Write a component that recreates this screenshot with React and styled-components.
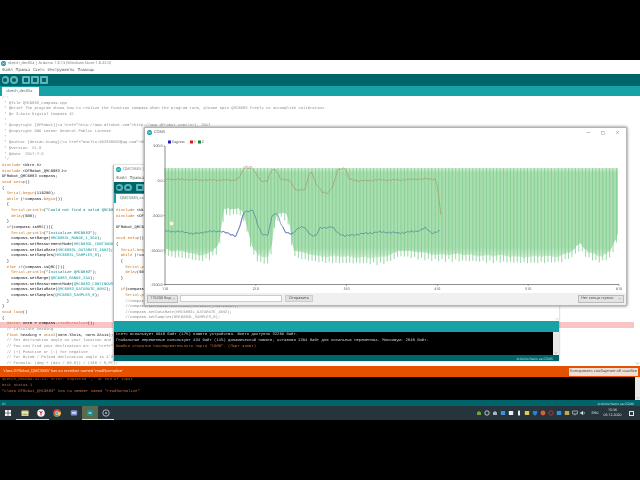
import React from 'react';
import styled, { createGlobalStyle } from 'styled-components';
import { Minus, Square, X, ChevronDown } from 'lucide-react';

const Global = createGlobalStyle`
  html, body { margin: 0; padding: 0; background: #000; width: 640px; height: 480px; overflow: hidden; }
  * { box-sizing: border-box; text-rendering: geometricPrecision; }
`;
const Screen = styled.div`
  width: 640px; height: 480px; background: #000; padding-top: 60px;
  font-family: "Open Sans", "Liberation Sans", sans-serif; overflow: hidden;
`;
const Desktop = styled.div`
  position: relative; width: 640px; height: 360px; display: flex; flex-direction: column;
  filter: blur(0.35px); overflow: hidden;
`;
const MainWindow = styled.div`flex: 1; min-height: 0; display: flex; flex-direction: column; background: #fff;`;
const TitleBar = styled.div`
  height: ${p => p.$h || 7}px; flex: none; display: flex; align-items: center; gap: 2px; padding-left: ${p => p.$pad || 1}px;
  background: #fff; color: #777; font-size: 3.9px; white-space: nowrap;
`;
const AppBadge = styled.svg`width: 5px; height: 5px; flex: none;`;
const MenuBar = styled.div`
  height: ${p => p.$h || 7}px; flex: none; display: flex; align-items: center; gap: ${p => p.$gap || 3}px; padding-left: 2px;
  background: #fff; color: #555; font-size: 4.1px; white-space: nowrap;
`;
const Toolbar = styled.div`
  height: ${p => p.$h || 12}px; flex: none; background: #00656a; display: flex; align-items: center; padding-left: 1.5px; gap: 1.6px;
`;
const ToolBtn = styled.div`
  width: 7.4px; height: 7.4px; background: #5cb6ba; border-radius: ${p => p.$round ? '50%' : '1px'};
  margin-right: ${p => p.$sep ? 3 : 0}px; display: flex; align-items: center; justify-content: center;
  & > i { display: block; width: 3.6px; height: 3.6px; background: #00656a; border-radius: ${p => p.$round ? '50%' : '0'}; }
`;
const TabRow = styled.div`
  height: ${p => p.$h || 10}px; flex: none; background: #17a2a7; display: flex; align-items: flex-end; padding-left: 2px;
`;
const Tab = styled.div`
  width: ${p => p.$w || 37}px; height: 9px; background: #fff; color: #3d6f70; font-size: 3.9px; display: flex; align-items: center;
  padding-left: 4px; white-space: nowrap; overflow: hidden; font-family: "Open Sans", sans-serif;
`;
const EditorWrap = styled.div`flex: 1; min-height: 0; display: flex; background: #fff;`;
const Code = styled.div`
  flex: 1; min-width: 0; overflow: hidden; padding-top: ${p => p.$top || 0}px;
  font-family: "Liberation Mono", monospace; font-size: 3.87px; line-height: 5.67px; color: #111;
`;
const Line = styled.div`
  height: 5.67px; white-space: pre; padding-left: ${p => p.$left || 2}px; background: ${p => p.$hl ? '#f8c4c4' : 'transparent'};
`;
const Tok = styled.span`color: ${p => p.$c};`;
const ScrollBar = styled.div`
  width: ${p => p.$w || 6}px; flex: none; background: ${p => p.$bg || '#fff'}; display: flex; flex-direction: column; justify-content: flex-end; align-items: center;
  color: #666;
`;
const ErrorBar = styled.div`
  height: 11px; flex: none; background: #e65100; color: #ffe5d6; font-size: 3.9px; display: flex; align-items: center;
  justify-content: space-between; padding: 0 2px 0 3px; white-space: nowrap;
`;
const CopyBtn = styled.div`
  width: 69px; height: 8px; background: #f1ddd3; color: #444; font-size: 3.9px; display: flex; align-items: center; justify-content: center;
`;
const ConsoleWrap = styled.div`height: ${p => p.$h}px; flex: none; background: #000; display: flex;`;
const ConsoleText = styled.div`
  flex: 1; min-width: 0; overflow: hidden; padding: ${p => p.$top || 0}px 0 0 ${p => p.$left || 2}px;
  font-family: "Liberation Mono", monospace; font-size: 3.9px; line-height: 6px; white-space: pre;
`;
const ConsoleLine = styled.div`color: ${p => p.$c || '#d8d8d8'};`;
const StatusBar = styled.div`
  height: 6px; flex: none; background: #00656a; color: #bfe0e0; font-size: 3.3px; display: flex; align-items: center; justify-content: space-between; padding: 0 6px 0 2px; white-space: nowrap;
`;
const Taskbar = styled.div`
  height: 14px; flex: none; background: #26343c; display: flex; align-items: center; color: #dfe6e8;
`;
const TaskSlot = styled.div`
  width: 16.35px; height: 14px; display: flex; align-items: center; justify-content: center;
  background: ${p => p.$active ? '#5b6a4e' : 'transparent'};
  border-bottom: ${p => p.$run ? '1px solid #d8dde0' : '1px solid transparent'};
`;
const Tray = styled.div`margin-left: auto; display: flex; align-items: center; gap: 2px; padding-right: 6px; height: 14px;`;
const TrayIcon = styled.svg`width: 6px; height: 6px; flex: none;`;
const TrayLang = styled.div`font-size: 3.5px; margin-left: 2px; width: 11px; text-align: center;`;
const Clock = styled.div`font-size: 3.5px; line-height: 5.2px; text-align: center; width: 20px;`;
const Notif = styled.div`width: 5.5px; height: 5px; border: 0.7px solid #dfe6e8; margin-left: 4px;`;

const SecondWindow = styled.div`
  position: absolute; left: 113px; top: 105px; width: 446px; height: 196px;
  display: flex; flex-direction: column; background: #fff; border-left: 1px solid #bbb; box-shadow: 0 0 2px rgba(0,0,0,.35);
`;
const Plotter = styled.div`
  position: absolute; left: 144px; top: 67px; width: 483px; height: 179px; display: flex; flex-direction: column;
  background: #fff; border: 1px solid #b5b5b5; box-shadow: 0 0 3px rgba(0,0,0,.55);
`;
const PlotTitle = styled.div`
  height: 9px; flex: none; display: flex; align-items: center; gap: 2px; padding: 0 6px 0 2px; font-size: 3.9px; color: #555;
`;
const WinCtl = styled.div`margin-left: auto; display: flex; gap: 10px; color: #444; align-items: center;`;
const PlotSvg = styled.svg`display: block; flex: none;`;
const Controls = styled.div`
  flex: 1; background: #f0f0f0; display: flex; align-items: center; padding: 0 2px 1px 2px; font-size: 3.8px; color: #444; gap: 2px;
`;
const Sel = styled.div`
  width: ${p => p.$w}px; height: 8px; background: #e4e4e4; border: 0.5px solid #bbb; display: flex; align-items: center; justify-content: space-between;
  padding: 0 2px; white-space: nowrap; margin-left: ${p => p.$auto ? 'auto' : '0'};
`;
const Input = styled.div`width: 102px; height: 7.5px; background: #fff; border: 0.5px solid #ccc;`;
const SendBtn = styled.div`width: 28px; height: 7.5px; background: #e1e1e1; border: 0.5px solid #ccc; display: flex; align-items: center; justify-content: center; margin-left: 1px;`;

const KW = /(\bvoid\b|\bwhile\b|\bif\b|\belse\b|\bfloat\b|\bsetup\b|\bloop\b|\bSerial\b|\bbegin\b|\bprintln\b|\bdelay\b|\batan2\b|#include|"[^"]*"|HMC5883L?_[A-Z0-9_]+|QMC5883_[A-Z0-9_]+|\bVector\b|readNormalize)/g;
const tint = t => {
  if (t.startsWith('"')) return '#0a7a7e';
  if (/^(void|while|if|else|float|#include|Vector)$/.test(t)) return '#c8701c';
  if (/^(Serial)$/.test(t)) return '#d07a20';
  if (/MC5883/.test(t)) return '#00979c';
  if (t === 'readNormalize') return '#d87070';
  return '#c8701c';
};
const Highlight = ({ text }) => {
  if (/^\s*(\/\/|\/\*|\*)/.test(text)) return <Tok $c="#8d8d8d">{text}</Tok>;
  return text.split(KW).map((t, i) => (i % 2 ? <Tok key={i} $c={tint(t)}>{t}</Tok> : t));
};

const mainCode = `/*!
 * @file QMC5883_compass.cpp
 * @brief The program shows how to realize the function compass.When the program runs, please spin QMC5883 freely to accomplish calibration.
 * @n 3-Axis Digital Compass IC
 *
 * @copyright [DFRobot](<a href="http://www.dfrobot.com">http://www.dfrobot.com</a>), 2017
 * @copyright GNU Lesser General Public License
 *
 * @author [dexian.huang](<a href="mailto:952838602@qq.com">952838602@qq.com</a>)
 * @version  V1.0
 * @date  2017-7-3
 */
#include <Wire.h>
#include <DFRobot_QMC5883.h>
DFRobot_QMC5883 compass;
void setup()
{
  Serial.begin(115200);
  while (!compass.begin())
  {
    Serial.println("Could not find a valid QMC5883 sensor, check wiring!");
    delay(500);
  }
  if(compass.isHMC()){
    Serial.println("Initialize HMC5883");
    compass.setRange(HMC5883L_RANGE_1_3GA);
    compass.setMeasurementMode(HMC5883L_CONTINOUS);
    compass.setDataRate(HMC5883L_DATARATE_15HZ);
    compass.setSamples(HMC5883L_SAMPLES_8);
  }
  else if(compass.isQMC()){
    Serial.println("Initialize QMC5883");
    compass.setRange(QMC5883_RANGE_2GA);
    compass.setMeasurementMode(QMC5883_CONTINOUS);
    compass.setDataRate(QMC5883_DATARATE_50HZ);
    compass.setSamples(QMC5883_SAMPLES_8);
  }
}
void loop()
{
  Vector norm = compass.readNormalize();
  // Calculate heading
  float heading = atan2(norm.YAxis, norm.XAxis);
  // Set declination angle on your location and fix heading
  // You can find your declination on: <a href="http://magnetic-declination.com/">http://magnetic-declination.com/</a>
  // (+) Positive or (-) for negative
  // For Bytom / Poland declination angle is 4'26E (positive)
  // Formula: (deg + (min / 60.0)) / (180 / M_PI);`.split('\n');

const secondCode = `#include <Wire.h>
#include <DFRobot_QMC5883.h>

DFRobot_QMC5883 compass;

void setup()
{
  Serial.begin(115200);
  while (!compass.begin())
  {
    Serial.println("Could not find a valid QMC5883 sensor, check wiring!");
    delay(500);
  }

  if(compass.isHMC()){
    Serial.println("Initialize HMC5883");
    //compass.setRange(HMC5883L_RANGE_1_3GA);
    //compass.setMeasurementMode(HMC5883L_CONTINOUS);
    //compass.setDataRate(HMC5883L_DATARATE_15HZ);
    //compass.setSamples(HMC5883L_SAMPLES_8);`.split('\n');

const Badge = ({ bg = '#00979c' }) => (
  <AppBadge viewBox="0 0 10 10">
    <circle cx="5" cy="5" r="5" fill={bg} />
    <circle cx="3.3" cy="5" r="1.6" fill="none" stroke="#fff" strokeWidth="0.9" />
    <circle cx="6.7" cy="5" r="1.6" fill="none" stroke="#fff" strokeWidth="0.9" />
  </AppBadge>
);

const ToolRow = ({ h }) => (
  <Toolbar $h={h}>
    <ToolBtn $round><i /></ToolBtn>
    <ToolBtn $round $sep><i /></ToolBtn>
    <ToolBtn><i /></ToolBtn>
    <ToolBtn><i /></ToolBtn>
    <ToolBtn><i /></ToolBtn>
  </Toolbar>
);

/* ---------- plot data ---------- */
const OX = 145, OY = 137; // plot-svg origin on the page
const lerp = (pts, x) => {
  for (let i = 1; i < pts.length; i++) {
    if (x <= pts[i][0]) {
      const [a, b] = pts[i - 1], [c, d] = pts[i];
      return b + (d - b) * (x - a) / (c - a);
    }
  }
  return pts[pts.length - 1][1];
};
const wob = x => Math.sin(x * 1.37) * 0.8 + Math.sin(x * 3.3 + 1) * 0.5 + Math.sin(x * 0.41) * 0.5;
const bottomPts = [[165,254],[172,257],[185,258],[200,261],[212,258],[219,250],[222,228],[224,216],[238,214],[243,218],[247,232],[252,252],[258,262],[268,264],[272,250],[275,224],[279,218],[286,219],[290,232],[293,256],[302,259],[320,262],[340,263],[360,263],[380,264],[388,262],[400,256],[415,258],[430,260],[470,261],[500,262],[530,263],[560,262],[572,257],[580,250],[588,258],[600,262],[610,258],[618,240]];
const orangePts = [[165,179],[200,180],[235,180],[240,177],[244,168],[252,168],[256,174],[261,181],[267,181],[272,170],[276,170],[281,179],[290,181],[296,190],[305,190],[309,174],[312,172],[316,184],[322,192],[328,193],[333,186],[338,169],[345,168],[349,179],[360,181],[375,180],[400,180],[420,179],[435,179],[437,183],[439,200],[441,215]];
const bluePts = [[165,231],[185,232],[193,234],[205,232],[220,231],[236,236],[240,226],[244,212],[253,210],[258,226],[262,234],[268,235],[272,216],[277,213],[282,226],[286,233],[292,234],[298,228],[304,227],[311,235],[316,236],[320,228],[332,227],[338,233],[345,236],[360,234],[380,232],[400,233],[418,231],[425,228],[432,233],[440,231]];

const poly = (pts, x0, x1, off = 0) => {
  const o = [];
  for (let x = x0; x <= x1; x += 1.2) o.push(`${(x - OX).toFixed(1)},${(lerp(pts, x) + wob(x) * 0.7 + off - OY).toFixed(1)}`);
  return o.join(' ');
};
const stripes = [];
for (let x = 165; x <= 618; x += 3.42) stripes.push(x);
const areaPts = () => {
  const o = [`${165 - OX},${168 - OY}`, `${618 - OX},${168 - OY}`];
  for (let x = 618; x >= 165; x -= 2) o.push(`${x - OX},${lerp(bottomPts, x) - 6 + wob(x) - OY}`);
  return o.join(' ');
};

const Plot = () => {
  const axisColor = '#6e6e6e';
  const tickYs = [[146, '500.0'], [181, '0.0'], [215.6, '-500.0'], [250.3, '-1000.0'], [284.5, '-1500.0']];
  const tickXs = [[165, '110'], [255.8, '210'], [346.5, '310'], [437.3, '410'], [528.2, '510'], [619, '610']];
  return (
    <PlotSvg width="481" height="156" viewBox="0 0 481 156" fontFamily="Open Sans, sans-serif">
      <defs>
        <linearGradient id="fade" x1="0" y1="0" x2="0" y2="1">
          <stop offset="0" stopColor="#d6f0d9" />
          <stop offset="0.05" stopColor="#a9deb1" />
          <stop offset="0.88" stopColor="#a9deb1" />
          <stop offset="1" stopColor="#d6f0d9" />
        </linearGradient>
      </defs>
      <polygon points={areaPts()} fill="url(#fade)" />
      {stripes.map(x => (
        <line key={x} x1={x - OX} x2={x - OX} y1={168 - OY} y2={lerp(bottomPts, x) + wob(x * 2) - OY} stroke="#7fcc8d" strokeWidth="0.8" />
      ))}
      <polyline points={poly(orangePts, 243, 253, -1.5)} fill="none" stroke="#d86a6a" strokeWidth="0.5" />
      <polyline points={poly(orangePts, 165, 441)} fill="none" stroke="#a8935a" strokeWidth="0.65" />
      <polyline points={poly(bluePts, 165, 440)} fill="none" stroke="#3a7d93" strokeWidth="0.65" />
      <polyline points={poly(bluePts, 221, 244)} fill="none" stroke="#6a66cc" strokeWidth="0.65" />
      <polyline points={poly(bluePts, 283, 293)} fill="none" stroke="#6a66cc" strokeWidth="0.65" />
      <line x1={165 - OX} x2={165 - OX} y1={146 - OY} y2={284.5 - OY} stroke={axisColor} strokeWidth="0.8" />
      <line x1={165 - OX} x2={619 - OX} y1={284.5 - OY} y2={284.5 - OY} stroke={axisColor} strokeWidth="0.8" />
      {tickYs.map(([y, t]) => (
        <g key={t}>
          <line x1={163.5 - OX} x2={165 - OX} y1={y - OY} y2={y - OY} stroke={axisColor} strokeWidth="0.6" />
          <text x={162.5 - OX} y={y + 1.3 - OY} textAnchor="end" fontSize="3.6" fill="#444">{t}</text>
        </g>
      ))}
      {tickXs.map(([x, t]) => (
        <g key={t}>
          <line x1={x - OX} x2={x - OX} y1={284.5 - OY} y2={286 - OY} stroke={axisColor} strokeWidth="0.6" />
          <text x={x - OX} y={289.5 - OY} textAnchor="middle" fontSize="3.6" fill="#444">{t}</text>
        </g>
      ))}
      <rect x={168 - OX} y={140.5 - OY} width="3" height="3" fill="#1c1cc4" />
      <text x={172 - OX} y={143.3 - OY} fontSize="3.4" fill="#444">Degress</text>
      <rect x={190 - OX} y={140.5 - OY} width="3" height="3" fill="#d81c1c" />
      <text x={194 - OX} y={143.3 - OY} fontSize="3.4" fill="#444">Y</text>
      <rect x={198 - OX} y={140.5 - OY} width="3" height="3" fill="#148a2c" />
      <text x={202 - OX} y={143.3 - OY} fontSize="3.4" fill="#444">Z</text>
      <circle cx={171.5 - OX} cy={223.5 - OY} r="2" fill="#f6f6d8" stroke="#e6e6a0" strokeWidth="0.5" />
    </PlotSvg>
  );
};

/* ---------- taskbar icons ---------- */
const Ico = styled.svg`width: 8px; height: 8px; display: block;`;
const WinIco = () => <Ico viewBox="0 0 8 8"><g fill="#f2f5f7"><rect x="1" y="1" width="2.7" height="2.7"/><rect x="4.3" y="1" width="2.7" height="2.7"/><rect x="1" y="4.3" width="2.7" height="2.7"/><rect x="4.3" y="4.3" width="2.7" height="2.7"/></g></Ico>;
const FolderIco = () => <Ico viewBox="0 0 8 8"><rect x="0.5" y="1.5" width="7" height="5.5" fill="#e8cf7a"/><rect x="0.5" y="3" width="7" height="1" fill="#f5e6a8"/><rect x="2.5" y="5" width="3" height="0.7" fill="#6a90b0"/></Ico>;
const YaIco = () => <Ico viewBox="0 0 8 8"><circle cx="4" cy="4" r="3.8" fill="#f3f3f3"/><path d="M2.6 2 L4 4.2 L5.4 2 M4 4.2 V6.4" stroke="#d8222a" strokeWidth="1" fill="none"/></Ico>;
const ChromeIco = () => <Ico viewBox="0 0 8 8"><circle cx="4" cy="4" r="3.8" fill="#d9503f"/><path d="M4 4 L0.7 6 A3.8 3.8 0 0 0 5.9 7.3Z" fill="#4fa85b"/><path d="M4 4 L7.5 2.6 A3.8 3.8 0 0 1 5.9 7.3Z" fill="#f0c33c"/><circle cx="4" cy="4" r="1.5" fill="#5b8fd8" stroke="#fff" strokeWidth="0.5"/></Ico>;
const DiscordIco = () => <Ico viewBox="0 0 8 8"><rect x="0.8" y="1.2" width="6.4" height="5.4" rx="1" fill="#7f91d8"/><rect x="2" y="3" width="4" height="1.6" fill="#d8def5"/></Ico>;
const ArduinoIco = () => <Ico viewBox="0 0 8 8"><rect x="1" y="1" width="6" height="6" fill="#1f8f92"/><rect x="2.5" y="3.4" width="3" height="1.2" fill="#cfe8e8"/></Ico>;
const RingIco = () => <Ico viewBox="0 0 8 8"><circle cx="4" cy="4" r="3.2" fill="#222c33" stroke="#d5d9dc" strokeWidth="0.8"/><circle cx="4" cy="4" r="1.2" fill="#8b949a"/></Ico>;

const trayColors = ['#6fa83a','#e6e6e6','#aab4ba','#3d8fe0','#e8eef2','#e8eef2','#e2c94f','#2d7fd8','#d8603a','#c83a30','#3a8fd8','#c8a848','#dfe6e8','#dfe6e8'];
const trayKinds = ['s','ring','s','r','r','bar','r','shield','c','ring','r','r','mon','spk'];
const TrayGlyph = ({ c, kind }) => (
  <TrayIcon viewBox="0 0 6 6">
    {kind === 's' && <path d="M1 5 V2.5 L3 1 L5 2.5 V5Z" fill={c} />}
    {kind === 'ring' && <circle cx="3" cy="3" r="2.2" fill="none" stroke={c} strokeWidth="0.8" />}
    {kind === 'r' && <rect x="0.8" y="1" width="4.4" height="4" rx="0.6" fill={c} />}
    {kind === 'bar' && <rect x="2" y="0.5" width="2" height="5" rx="0.6" fill={c} />}
    {kind === 'shield' && <path d="M0.8 1 H5.2 V3 C5.2 4.5 3 5.6 3 5.6 C3 5.6 0.8 4.5 0.8 3Z" fill={c} />}
    {kind === 'c' && <circle cx="3" cy="3" r="2.4" fill={c} />}
    {kind === 'mon' && <path d="M0.6 1 H5.4 V4 H0.6Z M3 4 V5.4" fill="none" stroke={c} strokeWidth="0.6" />}
    {kind === 'spk' && <path d="M0.6 2.2 H1.8 L3 1 V5 L1.8 3.8 H0.6Z M4 2 Q5 3 4 4" fill={c} stroke={c} strokeWidth="0.3" />}
  </TrayIcon>
);

export default function App() {
  return (
    <Screen>
      <Global />
      <Desktop>
        <MainWindow>
          <TitleBar $pad={1}><Badge />sketch_dec05a | Arduino 1.8.13 (Windows Store 1.8.42.0)</TitleBar>
          <MenuBar>
            <span>Файл</span><span>Правка</span><span>Скетч</span><span>Инструменты</span><span>Помощь</span>
          </MenuBar>
          <ToolRow />
          <TabRow><Tab>sketch_dec05a</Tab></TabRow>
          <EditorWrap>
            <Code>
              {mainCode.map((l, i) => (
                <Line key={i} $hl={l.includes('readNormalize')}><Highlight text={l} /></Line>
              ))}
            </Code>
            <ScrollBar><ChevronDown size={5} /></ScrollBar>
          </EditorWrap>
          <ErrorBar>
            <span>'class DFRobot_QMC5883' has no member named 'readNormalize'</span>
            <CopyBtn>Копировать сообщение об ошибке</CopyBtn>
          </ErrorBar>
          <ConsoleWrap $h={23}>
            <ConsoleText $top={0}>
              <ConsoleLine $c="#a8623a">sketch_dec05a:41:11: error: expected ';' at end of input</ConsoleLine>
              <ConsoleLine $c="#b86a3c">exit status 1</ConsoleLine>
              <ConsoleLine $c="#c8703c">"class DFRobot_QMC5883" has no member named "readNormalize"</ConsoleLine>
            </ConsoleText>
            <ScrollBar $w={5} $bg="#e9e9e9"><ChevronDown size={4} /></ScrollBar>
          </ConsoleWrap>
          <StatusBar><span>41</span><span>Arduino Nano на COM6</span></StatusBar>
        </MainWindow>
        <Taskbar>
          <TaskSlot><WinIco /></TaskSlot>
          <TaskSlot $run><FolderIco /></TaskSlot>
          <TaskSlot $run><YaIco /></TaskSlot>
          <TaskSlot><ChromeIco /></TaskSlot>
          <TaskSlot><DiscordIco /></TaskSlot>
          <TaskSlot $run $active><ArduinoIco /></TaskSlot>
          <TaskSlot $run><RingIco /></TaskSlot>
          <Tray>
            {trayColors.map((c, i) => <TrayGlyph key={i} c={c} kind={trayKinds[i]} />)}
            <TrayLang>ENG</TrayLang>
            <Clock>15:36<br />05.12.2020</Clock>
            <Notif />
          </Tray>
        </Taskbar>

        <SecondWindow>
          <TitleBar $h={9} $pad={2}><Badge />QMC5883 | Arduino 1.8.13</TitleBar>
          <MenuBar $h={8} $gap={3}><span>Файл</span><span>Правка</span></MenuBar>
          <ToolRow h={11} />
          <TabRow $h={10}><Tab $w={30}>QMC5883_compass</Tab></TabRow>
          <EditorWrap>
            <Code $top={6}>
              {secondCode.map((l, i) => <Line key={i}><Highlight text={l} /></Line>)}
            </Code>
            <ScrollBar $w={4}><ChevronDown size={4} /></ScrollBar>
          </EditorWrap>
          <TabRow $h={11} />
          <ConsoleWrap $h={23}>
            <ConsoleText $left={2}>
              <ConsoleLine>Скетч использует 9940 байт (17%) памяти устройства. Всего доступно 32256 байт.</ConsoleLine>
              <ConsoleLine>Глобальные переменные используют 434 байт (11%) динамической памяти, оставляя 1364 байт для локальных переменных. Максимум: 2048 байт.</ConsoleLine>
              <ConsoleLine $c="#c8703c">Ошибка открытия последовательного порта "COM5". (Порт занят)</ConsoleLine>
            </ConsoleText>
            <ScrollBar $w={6} $bg="#e9e9e9"><ChevronDown size={4} /></ScrollBar>
          </ConsoleWrap>
          <StatusBar><span /><span>Arduino Nano на COM5</span></StatusBar>
        </SecondWindow>

        <Plotter>
          <PlotTitle>
            <Badge />COM5
            <WinCtl>
              <Minus size={5} strokeWidth={1.5} />
              <Square size={4} strokeWidth={1.5} />
              <X size={5} strokeWidth={1.5} />
            </WinCtl>
          </PlotTitle>
          <Plot />
          <Controls>
            <Sel $w={31}>115200 бод<ChevronDown size={3.5} /></Sel>
            <Input />
            <SendBtn>Отправить</SendBtn>
            <Sel $w={46} $auto>Нет конца строки<ChevronDown size={3.5} /></Sel>
          </Controls>
        </Plotter>
      </Desktop>
    </Screen>
  );
}
